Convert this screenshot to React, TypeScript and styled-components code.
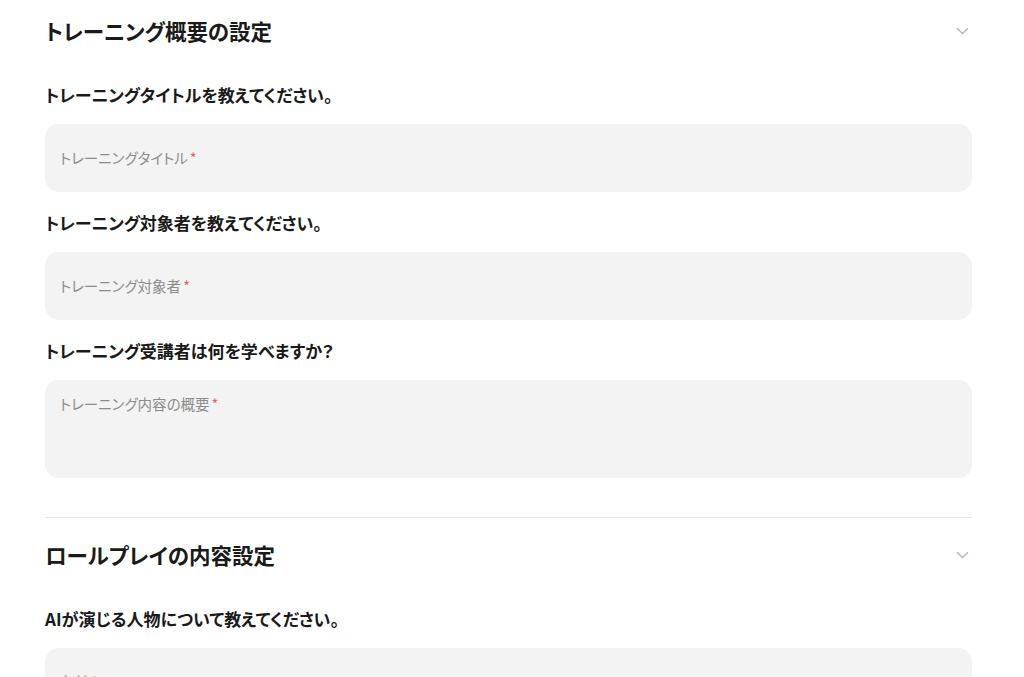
import React from 'react';
import styled, { createGlobalStyle } from 'styled-components';

const GlobalStyle = createGlobalStyle`
  html, body {
    margin: 0;
    padding: 0;
    background: #ffffff;
    overflow: hidden;
  }
  body {
    font-family: 'Noto Sans CJK JP', 'Noto Sans', sans-serif;
    color: #1a1a1a;
    font-feature-settings: 'palt';
  }
`;

const Page = styled.div`
  width: 927px;
  padding-left: 45px;
  height: 677px;
  overflow: hidden;
`;

const Section = styled.section<{ $first?: boolean; $last?: boolean }>`
  padding-top: ${(p) => (p.$first ? '16px' : '22px')};
  padding-bottom: 39px;
  border-bottom: ${(p) => (p.$last ? 'none' : '1px solid #e4e4e4')};
`;

const SectionHead = styled.div`
  display: flex;
  align-items: center;
  justify-content: space-between;
  height: 30px;
  margin-bottom: 37px;
`;

const Title = styled.h2`
  margin: 0;
  font-size: 21.5px;
  line-height: 30px;
  font-weight: 700;
`;

const Toggle = styled.button`
  border: none;
  background: none;
  padding: 0;
  margin-right: 3px;
  width: 14px;
  height: 14px;
  display: flex;
  align-items: center;
  justify-content: center;
  color: #b4b4b4;
  margin-top: 0;
`;

const Fields = styled.div`
  display: flex;
  flex-direction: column;
  gap: 19px;
`;

const Group = styled.div`
  display: flex;
  flex-direction: column;
  gap: 17px;
`;

const Label = styled.div`
  font-size: 17px;
  line-height: 24px;
  font-weight: 700;
`;

const Box = styled.div<{ $tall?: boolean }>`
  background: #f3f3f3;
  border-radius: 14px;
  height: ${(p) => (p.$tall ? '98px' : '68px')};
  padding: ${(p) => (p.$tall ? '14px 15px' : '0 15px')};
  box-sizing: border-box;
  display: flex;
  align-items: ${(p) => (p.$tall ? 'flex-start' : 'center')};
`;

const Placeholder = styled.span`
  font-size: 14.5px;
  line-height: 20px;
  color: #8c8c8c;
`;

const Req = styled.span`
  color: #e0635e;
  margin-left: 2px;
`;

const Chevron = () => (
  <Toggle>
    <svg width="13" height="8" viewBox="0 0 13 8" fill="none">
      <path d="M1 1.2 L6.5 6.5 L12 1.2" stroke="currentColor" strokeWidth="1.3" />
    </svg>
  </Toggle>
);

type FieldProps = { label: string; placeholder: string; tall?: boolean };

const Field = ({ label, placeholder, tall }: FieldProps) => (
  <Group>
    <Label>{label}</Label>
    <Box $tall={tall}>
      <Placeholder>
        {placeholder}
        <Req>*</Req>
      </Placeholder>
    </Box>
  </Group>
);

const App = () => (
  <Page>
    <GlobalStyle />
    <Section $first>
      <SectionHead>
        <Title>トレーニング概要の設定</Title>
        <Chevron />
      </SectionHead>
      <Fields>
        <Field label="トレーニングタイトルを教えてください。" placeholder="トレーニングタイトル" />
        <Field label="トレーニング対象者を教えてください。" placeholder="トレーニング対象者" />
        <Field label="トレーニング受講者は何を学べますか？" placeholder="トレーニング内容の概要" tall />
      </Fields>
    </Section>
    <Section $last>
      <SectionHead>
        <Title>ロールプレイの内容設定</Title>
        <Chevron />
      </SectionHead>
      <Fields>
        <Field label="AIが演じる人物について教えてください。" placeholder="名前" />
      </Fields>
    </Section>
  </Page>
);

export default App;
